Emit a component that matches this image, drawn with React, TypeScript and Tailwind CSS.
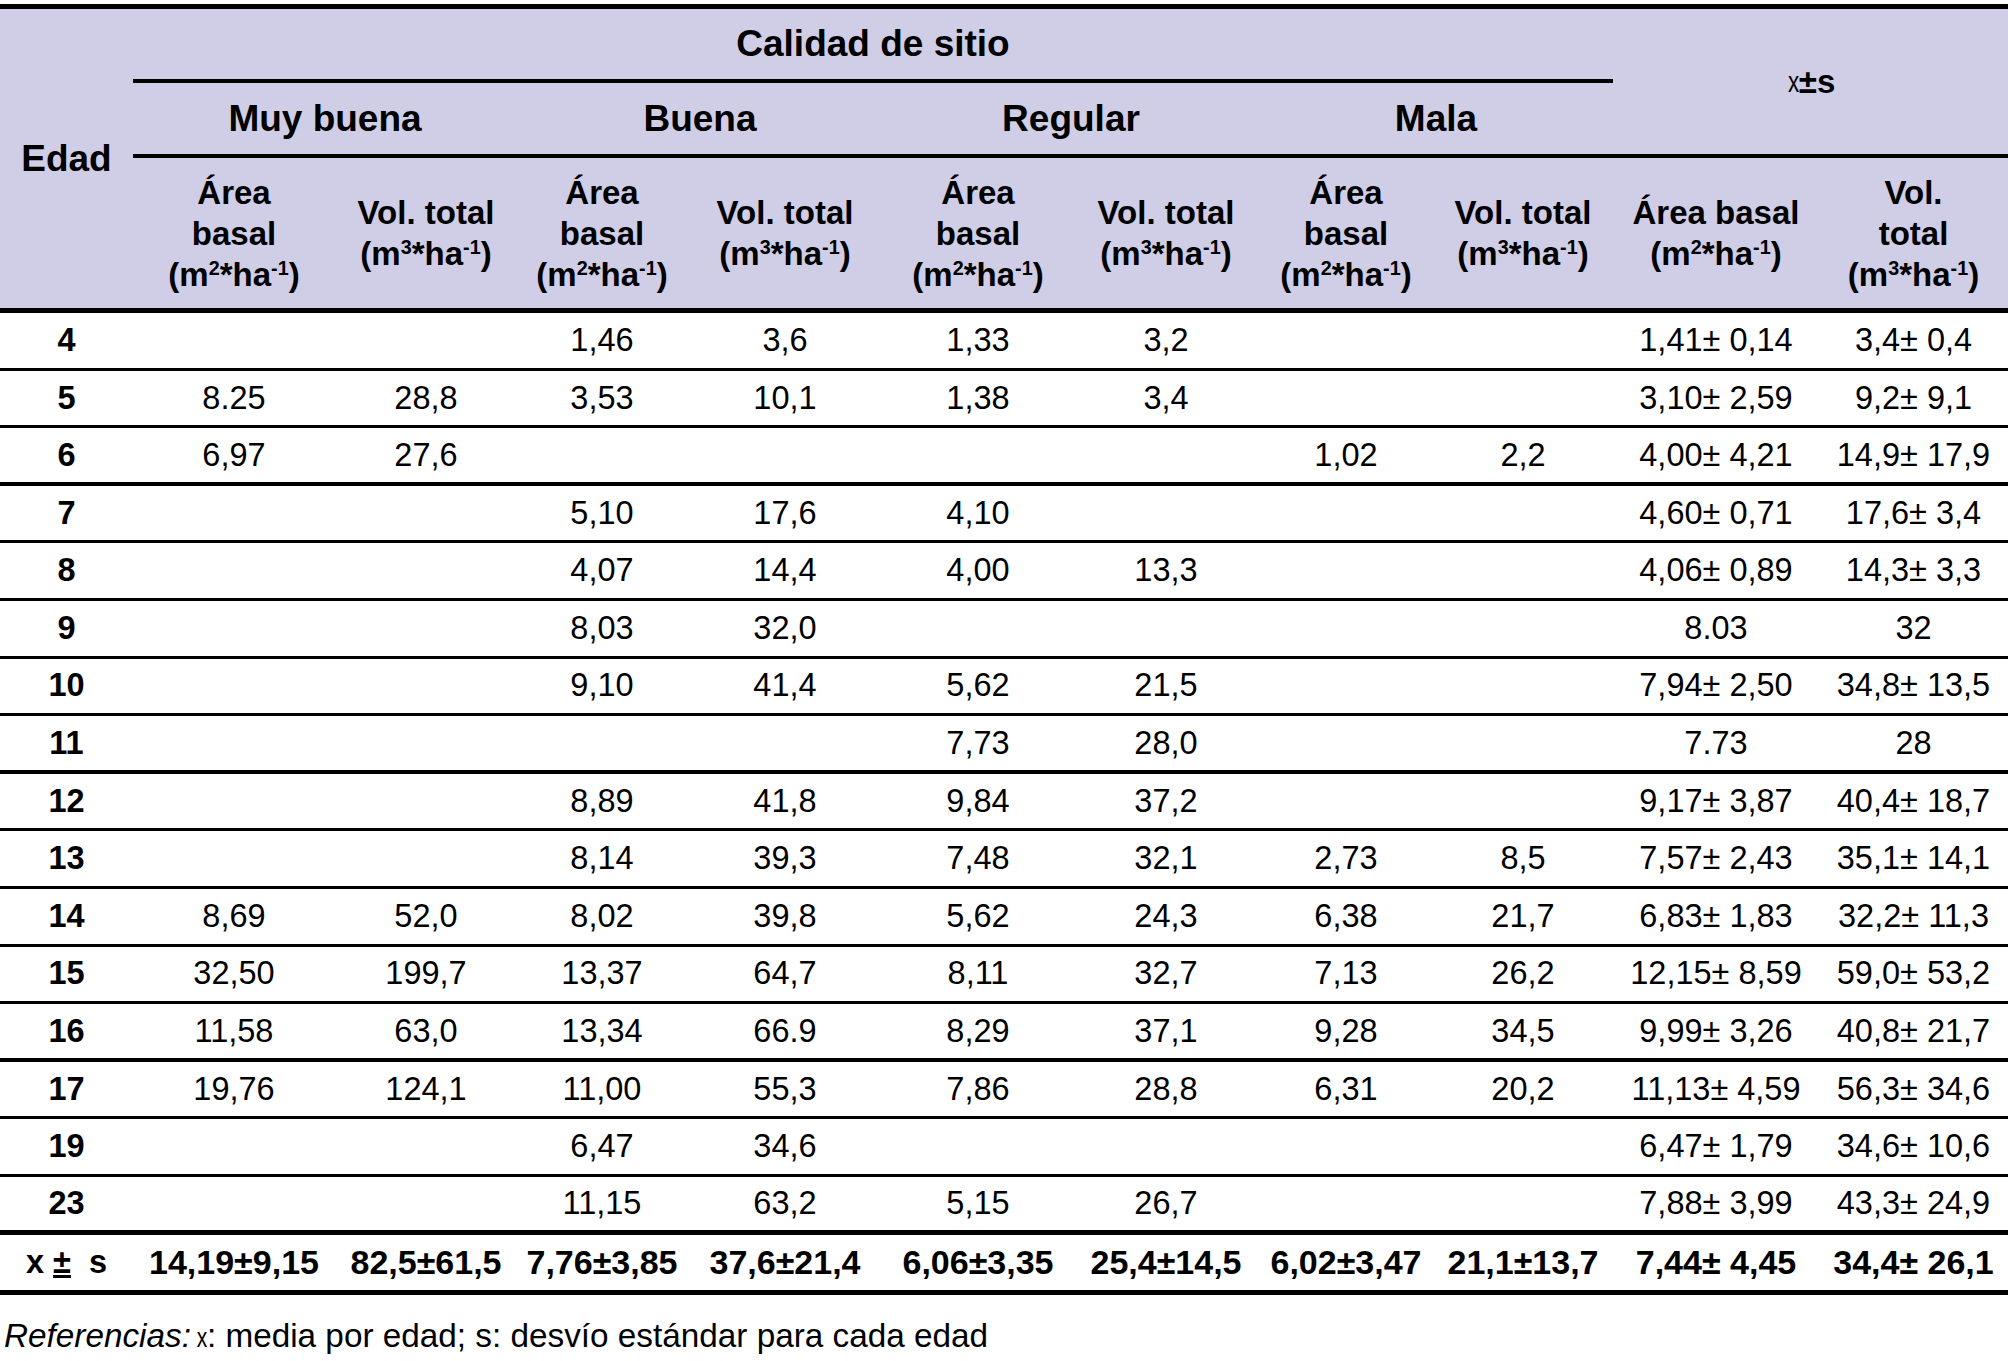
import React from 'react';

const widths = [
  'w-[133px]',
  'w-[202px]',
  'w-[182px]',
  'w-[170px]',
  'w-[196px]',
  'w-[190px]',
  'w-[186px]',
  'w-[174px]',
  'w-[180px]',
  'w-[206px]',
  'w-[189px]',
];

const rows: string[][] = [
  ['4', '', '', '1,46', '3,6', '1,33', '3,2', '', '', '1,41± 0,14', '3,4± 0,4'],
  ['5', '8.25', '28,8', '3,53', '10,1', '1,38', '3,4', '', '', '3,10± 2,59', '9,2± 9,1'],
  ['6', '6,97', '27,6', '', '', '', '', '1,02', '2,2', '4,00± 4,21', '14,9± 17,9'],
  ['7', '', '', '5,10', '17,6', '4,10', '', '', '', '4,60± 0,71', '17,6± 3,4'],
  ['8', '', '', '4,07', '14,4', '4,00', '13,3', '', '', '4,06± 0,89', '14,3± 3,3'],
  ['9', '', '', '8,03', '32,0', '', '', '', '', '8.03', '32'],
  ['10', '', '', '9,10', '41,4', '5,62', '21,5', '', '', '7,94± 2,50', '34,8± 13,5'],
  ['11', '', '', '', '', '7,73', '28,0', '', '', '7.73', '28'],
  ['12', '', '', '8,89', '41,8', '9,84', '37,2', '', '', '9,17± 3,87', '40,4± 18,7'],
  ['13', '', '', '8,14', '39,3', '7,48', '32,1', '2,73', '8,5', '7,57± 2,43', '35,1± 14,1'],
  ['14', '8,69', '52,0', '8,02', '39,8', '5,62', '24,3', '6,38', '21,7', '6,83± 1,83', '32,2± 11,3'],
  ['15', '32,50', '199,7', '13,37', '64,7', '8,11', '32,7', '7,13', '26,2', '12,15± 8,59', '59,0± 53,2'],
  ['16', '11,58', '63,0', '13,34', '66.9', '8,29', '37,1', '9,28', '34,5', '9,99± 3,26', '40,8± 21,7'],
  ['17', '19,76', '124,1', '11,00', '55,3', '7,86', '28,8', '6,31', '20,2', '11,13± 4,59', '56,3± 34,6'],
  ['19', '', '', '6,47', '34,6', '', '', '', '', '6,47± 1,79', '34,6± 10,6'],
  ['23', '', '', '11,15', '63,2', '5,15', '26,7', '', '', '7,88± 3,99', '43,3± 24,9'],
];

const totals = [
  '14,19±9,15',
  '82,5±61,5',
  '7,76±3,85',
  '37,6±21,4',
  '6,06±3,35',
  '25,4±14,5',
  '6,02±3,47',
  '21,1±13,7',
  '7,44± 4,45',
  '34,4± 26,1',
];

// rows after which the printed rule looks a bit heavier
const heavy = ['6', '11', '16'];

function M2() {
  return (
    <>
      (m<sup className="text-[0.6em] -top-[0.55em]">2</sup>*ha<sup className="text-[0.6em] -top-[0.55em]">-1</sup>)
    </>
  );
}

function M3() {
  return (
    <>
      (m<sup className="text-[0.6em] -top-[0.55em]">3</sup>*ha<sup className="text-[0.6em] -top-[0.55em]">-1</sup>)
    </>
  );
}

function Area() {
  return (
    <>
      Área
      <br />
      basal
      <br />
      <M2 />
    </>
  );
}

function Vol() {
  return (
    <>
      Vol. total
      <br />
      <M3 />
    </>
  );
}

export default function App() {
  const subHeads = [
    <Area />,
    <Vol />,
    <Area />,
    <Vol />,
    <Area />,
    <Vol />,
    <Area />,
    <Vol />,
    <>
      Área basal
      <br />
      <M2 />
    </>,
    <>
      Vol.
      <br />
      total
      <br />
      <M3 />
    </>,
  ];

  return (
    <div className="w-[2008px] min-h-screen bg-white pt-[4px] text-black font-['Liberation_Sans',Arial,sans-serif]">
      <div className="border-t-[5px] border-black">
        {/* header */}
        <div className="flex h-[304px] bg-[#cfcee6] border-b-[5px] border-black font-bold">
          <div className="w-[133px] flex items-center justify-center text-[37px]">Edad</div>
          <div className="flex-1 flex flex-col">
            <div className="flex h-[149px] border-b-4 border-black">
              <div className="w-[1480px] flex flex-col">
                <div className="h-[74px] border-b-4 border-black flex items-center justify-center text-[37px]">
                  Calidad de sitio
                </div>
                <div className="flex-1 flex items-center text-[37px]">
                  <div className="w-[384px] text-center">Muy buena</div>
                  <div className="w-[366px] text-center">Buena</div>
                  <div className="w-[376px] text-center">Regular</div>
                  <div className="w-[354px] text-center">Mala</div>
                </div>
              </div>
              <div className="flex-1 flex items-center justify-center text-[33px]">
                <span className="inline-block font-normal text-[30px] scale-x-75 -mr-[2px]">x</span>
                <span>±s</span>
              </div>
            </div>
            <div className="flex-1 flex items-center text-[33px] leading-[41px]">
              {subHeads.map((h, i) => (
                <div key={i} className={`${widths[i + 1]} text-center`}>
                  {h}
                </div>
              ))}
            </div>
          </div>
        </div>

        {/* body */}
        {rows.map((r) => (
          <div
            key={r[0]}
            className={`flex items-center h-[57.6px] border-black text-[32.5px] ${
              r[0] === '23' ? 'border-b-[5px]' : heavy.includes(r[0]) ? 'border-b-4' : 'border-b-[3px]'
            }`}
          >
            {r.map((c, i) => (
              <div key={i} className={`${widths[i]} text-center ${i === 0 ? 'font-bold' : ''}`}>
                {c}
              </div>
            ))}
          </div>
        ))}

        {/* totals */}
        <div className="flex items-center h-[60px] border-b-[5px] border-black font-bold text-[34px]">
          <div className={`${widths[0]} text-center text-[32.5px]`}>
            x <span className="underline">±</span>&nbsp; s
          </div>
          {totals.map((t, i) => (
            <div key={i} className={`${widths[i + 1]} text-center`}>
              {t}
            </div>
          ))}
        </div>
      </div>

      <div className="pl-[4px] pt-[24px] text-[33.3px] leading-none">
        <span className="italic">Referencias:</span>
        <span className="inline-block text-[28px] scale-x-75 ml-[4px] -mr-[2px]">x</span>: media por edad; s: desvío estándar para cada edad
      </div>
    </div>
  );
}
